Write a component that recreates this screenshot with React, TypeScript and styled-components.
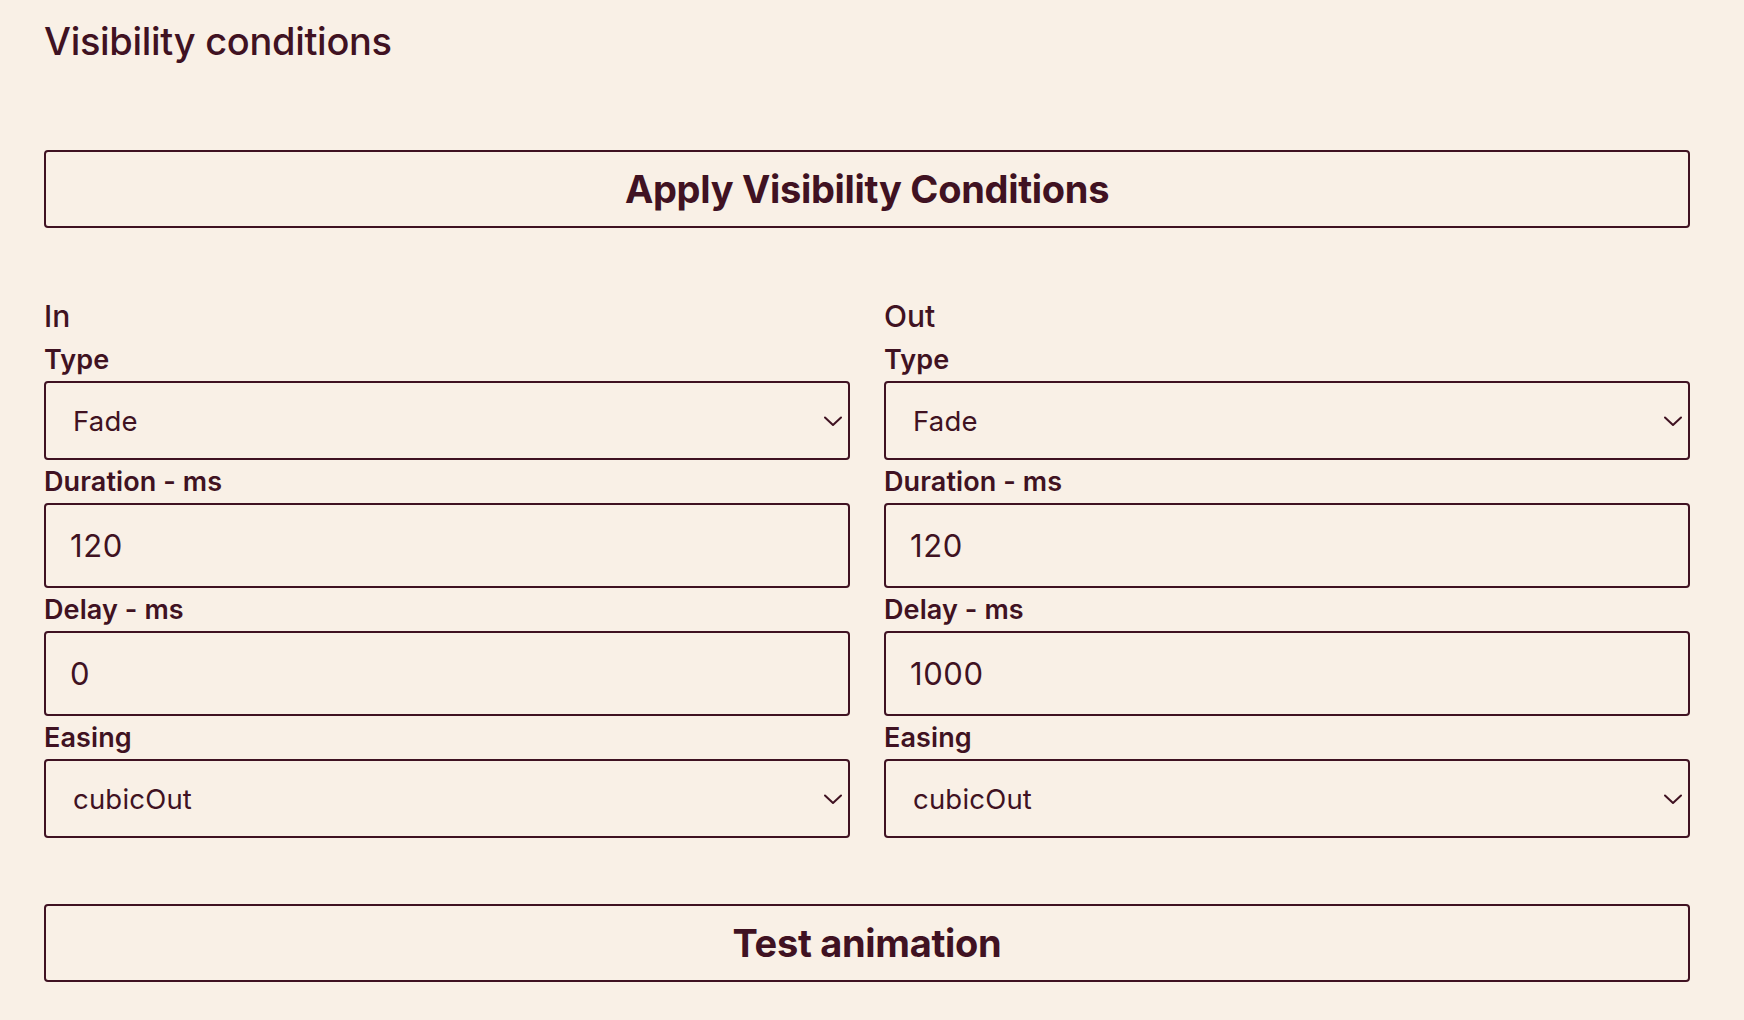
import React from "react";
import styled, { createGlobalStyle } from "styled-components";

const INK = "#401222";
const PAPER = "#f9f0e6";

const GlobalStyle = createGlobalStyle`
  html, body {
    margin: 0;
    padding: 0;
    background: ${PAPER};
  }
  body {
    font-family: Inter, "Noto Sans", "Liberation Sans", sans-serif;
    color: ${INK};
  }
  * { box-sizing: border-box; }
`;

const Page = styled.main`
  min-height: 1020px;
  padding: 18px 54px 0 44px;
  display: flex;
  flex-direction: column;
`;

const Title = styled.h1`
  margin: 0;
  font-size: 38px;
  line-height: 46px;
  font-weight: 500;
  letter-spacing: -0.3px;
`;

const WideButton = styled.button<{ $top: number }>`
  margin-top: ${(p) => p.$top}px;
  height: 78px;
  width: 100%;
  border: 2px solid ${INK};
  border-radius: 4px;
  background: transparent;
  color: ${INK};
  font-family: Inter, "Noto Sans", "Liberation Sans", sans-serif;
  font-size: 38px;
  font-weight: 700;
  letter-spacing: -0.3px;
  cursor: pointer;
  display: flex;
  align-items: center;
  justify-content: center;
`;

const Columns = styled.div`
  margin-top: 70px;
  display: grid;
  grid-template-columns: 1fr 1fr;
  column-gap: 34px;
`;

const Column = styled.section`
  display: flex;
  flex-direction: column;
`;

const ColumnHeading = styled.h2`
  margin: 0 0 3px;
  font-size: 30px;
  line-height: 37px;
  font-weight: 500;
`;

const FieldLabel = styled.label`
  display: block;
  font-size: 27px;
  line-height: 43px;
  font-weight: 600;
  letter-spacing: 0.1px;
`;

const SelectWrap = styled.div`
  position: relative;
  height: 79px;
`;

const Select = styled.select`
  appearance: none;
  -webkit-appearance: none;
  width: 100%;
  height: 100%;
  border: 2px solid ${INK};
  border-radius: 4px;
  background: transparent;
  color: ${INK};
  padding: 0 40px 0 27px;
  font-family: Inter, "Noto Sans", "Liberation Sans", sans-serif;
  font-size: 27.5px;
  font-weight: 400;
  letter-spacing: 0.2px;
  outline: none;
`;

const Chevron = styled.svg`
  position: absolute;
  right: 8px;
  top: 50%;
  width: 18px;
  height: 11px;
  margin-top: -5px;
  pointer-events: none;
`;

const TextInput = styled.input`
  width: 100%;
  height: 85px;
  border: 2px solid ${INK};
  border-radius: 4px;
  background: transparent;
  color: ${INK};
  padding: 0 24px;
  font-family: Inter, "Noto Sans", "Liberation Sans", sans-serif;
  font-size: 31px;
  font-weight: 400;
  letter-spacing: 0.6px;
  outline: none;
`;

type SideProps = {
  title: string;
  delay: string;
};

const ChevronIcon = () => (
  <Chevron viewBox="0 0 18 11" fill="none">
    <polyline
      points="1,1.5 9,9 17,1.5"
      stroke={INK}
      strokeWidth="2"
      strokeLinecap="round"
      strokeLinejoin="round"
    />
  </Chevron>
);

const Side = ({ title, delay }: SideProps) => (
  <Column>
    <ColumnHeading>{title}</ColumnHeading>
    <FieldLabel>Type</FieldLabel>
    <SelectWrap>
      <Select defaultValue="fade">
        <option value="fade">Fade</option>
        <option value="slide">Slide</option>
        <option value="scale">Scale</option>
      </Select>
      <ChevronIcon />
    </SelectWrap>
    <FieldLabel>Duration - ms</FieldLabel>
    <TextInput type="text" defaultValue="120" />
    <FieldLabel>Delay - ms</FieldLabel>
    <TextInput type="text" defaultValue={delay} />
    <FieldLabel>Easing</FieldLabel>
    <SelectWrap>
      <Select defaultValue="cubicOut">
        <option value="linear">linear</option>
        <option value="cubicIn">cubicIn</option>
        <option value="cubicOut">cubicOut</option>
        <option value="cubicInOut">cubicInOut</option>
      </Select>
      <ChevronIcon />
    </SelectWrap>
  </Column>
);

export default function App() {
  return (
    <>
      <GlobalStyle />
      <Page>
        <Title>Visibility conditions</Title>
        <WideButton $top={86}>Apply Visibility Conditions</WideButton>
        <Columns>
          <Side title="In" delay="0" />
          <Side title="Out" delay="1000" />
        </Columns>
        <WideButton $top={66}>Test animation</WideButton>
      </Page>
    </>
  );
}
